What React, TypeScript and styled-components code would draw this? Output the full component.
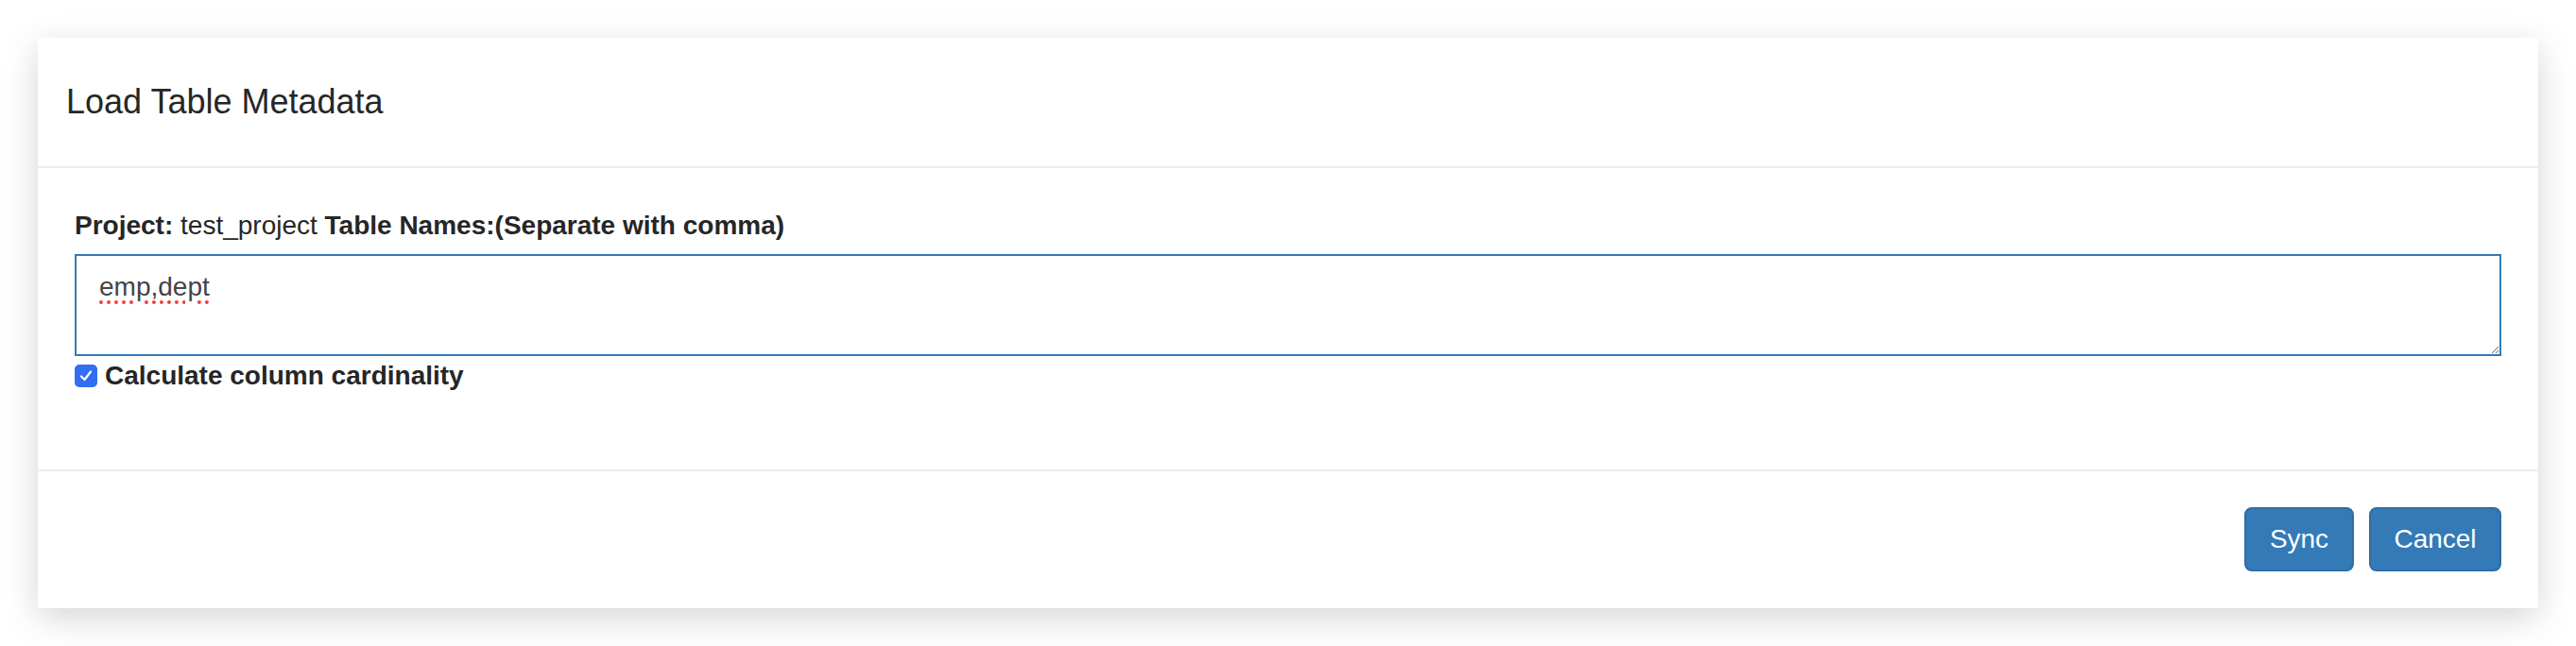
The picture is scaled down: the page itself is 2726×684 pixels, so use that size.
import React from "react";
import styled, { createGlobalStyle } from "styled-components";

const GlobalStyle = createGlobalStyle`
  html, body {
    margin: 0;
    padding: 0;
    background: #ffffff;
  }
  body {
    font-family: "Liberation Sans", Arial, Helvetica, sans-serif;
    color: #333333;
  }
  * { box-sizing: border-box; }
`;

const Page = styled.div`
  padding: 40px;
`;

const Modal = styled.div`
  background: #ffffff;
  box-shadow: 0 10px 34px rgba(0, 0, 0, 0.17);
  display: flex;
  flex-direction: column;
`;

const Header = styled.div`
  height: 138px;
  padding: 0 30px;
  display: flex;
  align-items: center;
  border-bottom: 2px solid #ececec;
`;

const Title = styled.h4`
  margin: 0;
  font-size: 36px;
  font-weight: 400;
  line-height: 1.42857;
  color: #262626;
`;

const Body = styled.div`
  padding: 41px 39px 80px 39px;
  display: flex;
  flex-direction: column;
`;

const FieldLabel = styled.label`
  display: block;
  font-size: 28px;
  line-height: 40px;
  margin-bottom: 10px;
  color: #262626;
`;

const Strong = styled.b`
  font-weight: 700;
`;

const TextArea = styled.textarea`
  display: block;
  width: 100%;
  height: 108px;
  padding: 13px 24px 11px;
  border: 2px solid #337ab7;
  border-radius: 0;
  outline: none;
  font-family: "Liberation Sans", Arial, Helvetica, sans-serif;
  font-size: 28px;
  line-height: 40px;
  color: #444444;
  resize: both;
  text-decoration-line: underline;
  text-decoration-style: dotted;
  text-decoration-color: #f04040;
  text-decoration-thickness: 4px;
  text-underline-offset: 5px;
`;

const CheckRow = styled.label`
  display: flex;
  align-items: center;
  gap: 8px;
  height: 40px;
  padding-top: 2px;
  font-size: 28px;
  font-weight: 700;
  color: #262626;
`;

const CheckBox = styled.span`
  width: 24px;
  height: 24px;
  border-radius: 5px;
  background: #2f6ff0;
  display: inline-flex;
  align-items: center;
  justify-content: center;
  flex: none;
`;

const Footer = styled.div`
  border-top: 2px solid #ececec;
  padding: 38px 39px 39px;
  display: flex;
  justify-content: flex-end;
  gap: 16px;
`;

const Button = styled.button<{ $w: number }>`
  width: ${(p) => p.$w}px;
  height: 68px;
  padding: 0 24px;
  background: #337ab7;
  border: 2px solid #2e6da4;
  border-radius: 8px;
  color: #ffffff;
  font-family: "Liberation Sans", Arial, Helvetica, sans-serif;
  font-size: 28px;
  line-height: 40px;
  cursor: pointer;
`;

export default function App() {
  return (
    <>
      <GlobalStyle />
      <Page>
        <Modal>
          <Header>
            <Title>Load Table Metadata</Title>
          </Header>
          <Body>
            <FieldLabel>
              <Strong>Project:</Strong> test_project <Strong>Table Names:(Separate with comma)</Strong>
            </FieldLabel>
            <TextArea defaultValue="emp,dept" spellCheck={false} rows={2} />
            <CheckRow>
              <CheckBox>
                <svg width="16" height="16" viewBox="0 0 16 16">
                  <path d="M3 8.5 L6.5 12 L13 3.5" fill="none" stroke="#ffffff" strokeWidth="2.2" strokeLinecap="round" strokeLinejoin="round" />
                </svg>
              </CheckBox>
              Calculate column cardinality
            </CheckRow>
          </Body>
          <Footer>
            <Button $w={116}>Sync</Button>
            <Button $w={140}>Cancel</Button>
          </Footer>
        </Modal>
      </Page>
    </>
  );
}
